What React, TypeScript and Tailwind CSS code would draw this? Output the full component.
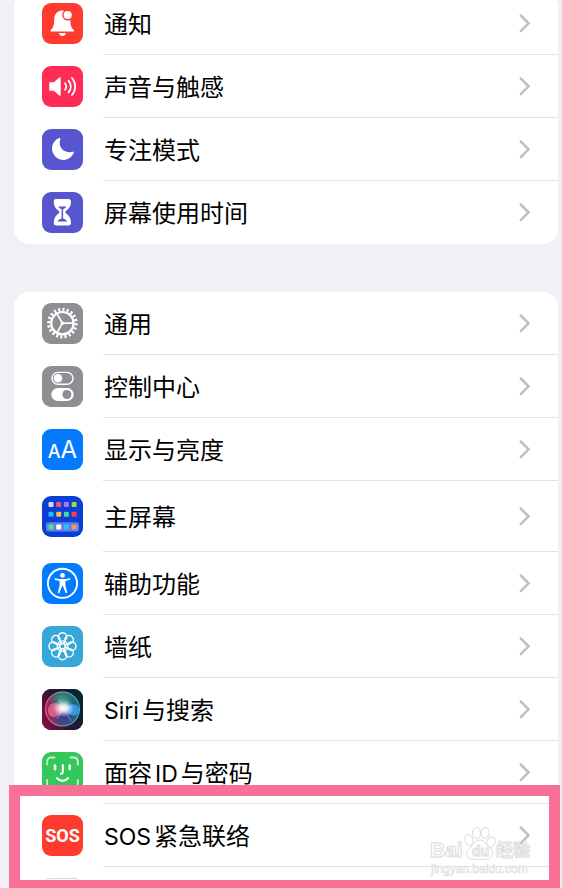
import type { ReactNode } from 'react'
import clsx from 'clsx'

interface SettingsItem {
  label: string
  icon: ReactNode
  tile: string
  tall?: boolean
  highlighted?: boolean
}

const BellIcon = () => (
  <svg viewBox="0 0 41 41" className="size-full" fill="#fff">
    <path d="M20.3 7.6c-5 0-7.800 3.6-8 8.6-.2 5.2-.6 7.600-2.600 9.700-.9 1-1.200 1.600-1.200 2.600h23.700c0-1-.4-1.600-1.300-2.600-2-2.100-2.400-4.500-2.600-9.700-.2-5-3-8.600-8-8.600z" />
    <path d="M17 30h6.800c-.3 1.900-1.500 3-3.400 3s-3.100-1.100-3.400-3z" />
    <circle cx="25.700" cy="12" r="5.500" fill="#ff3b30" />
    <circle cx="25.700" cy="12" r="4.100" />
  </svg>
)

const SpeakerIcon = () => (
  <svg viewBox="0 0 41 41" className="size-full" fill="none" stroke="#fff" strokeWidth="1.800" strokeLinecap="round">
    <path d="M8.200 16.300h3.600l5.500-4.700c.7-.6 1.400-.3 1.400.6v16.600c0 .9-.7 1.200-1.400.6l-5.500-4.700H8.200c-.6 0-1-.4-1-1v-6.400c0-.6.4-1 1-1z" fill="#fff" stroke="none" />
    <path d="M23 17.200c1.500 2 1.500 4.600 0 6.600" />
    <path d="M26.500 14.600c2.900 3.600 2.900 8.200 0 11.800" />
    <path d="M30 12c4.300 5.200 4.300 11.800 0 17" />
  </svg>
)

const MoonIcon = () => (
  <svg viewBox="0 0 41 41" className="size-full" fill="#fff">
    <path d="M17.200 9.100C18 8.700 18.600 9.300 18.300 10.100C15.800 18 21.500 25 30.700 22.700C31.600 22.500 32.100 23 31.800 23.800A11.300 11.300 0 1 1 17.200 9.100z" />
  </svg>
)

const HourglassIcon = () => (
  <svg viewBox="0 0 41 41" className="size-full">
    <path
      d="M14 7h12.700c1.500 0 2.300 1 2.300 2.300 0 4.600-1.900 7.500-4.800 9.400-1.200.8-1.200 2 0 2.800 2.900 1.900 4.800 5 4.800 9.600 0 1.300-.8 2.300-2.300 2.300H14c-1.500 0-2.300-1-2.300-2.300 0-4.600 1.900-7.700 4.800-9.600 1.200-.8 1.200-2 0-2.800-2.900-1.900-4.800-4.800-4.800-9.400C11.700 8 12.500 7 14 7z"
      fill="#fff"
    />
    <path d="M16.300 14.600h8.100c-.9 1.400-2 2.100-3.300 2.700v9.200c1.900.6 3.500 1.600 4.200 3.100h-9.900c.7-1.500 2.300-2.500 4.200-3.100v-9.200c-1.300-.6-2.400-1.300-3.300-2.700z" fill="#5756ce" />
  </svg>
)

const GearIcon = () => (
  <svg viewBox="0 0 41 41" className="size-full" fill="none" stroke="#fff">
    <circle cx="20.400" cy="20.200" r="11.200" strokeWidth="2.200" />
    <circle cx="20.400" cy="20.200" r="13.700" strokeWidth="3.200" pathLength="40" strokeDasharray="1 1" />
    <path d="M20.400 20.200h11M20.400 20.200l-5.500-9.600M20.400 20.200l-5.500 9.600" strokeWidth="1.700" />
    <circle cx="20.400" cy="20.200" r="1.700" fill="#fff" stroke="none" />
  </svg>
)

const TogglesIcon = () => (
  <svg viewBox="0 0 41 41" className="size-full">
    <rect x="10" y="6.400" width="21" height="11.800" rx="5.900" fill="none" stroke="#fff" strokeWidth="1.400" />
    <circle cx="16" cy="12.300" r="4.300" fill="#fff" />
    <rect x="9.300" y="22" width="22.400" height="13" rx="6.500" fill="#fff" />
    <circle cx="24.900" cy="28.500" r="4.500" fill="#8e8e93" />
  </svg>
)

const TextSizeIcon = () => (
  <span className="flex items-baseline font-[Inter,sans-serif] leading-none text-white">
    <span className="text-lg font-medium leading-none">A</span>
    <span className="text-2xl leading-none">A</span>
  </span>
)

const HomeScreenIcon = () => {
  const rows = [
    { y: 6, colors: ['#d9dde8', '#fb5468', '#b573f5', '#a6d63c'] },
    { y: 15.8, colors: ['#2fb4f5', '#fcc02d', '#41d9a0', '#fb3d3d'] },
    { y: 28.400, colors: ['#5be08a', '#ffffff', '#22c3f7', '#fb9750'] },
  ]
  return (
    <svg viewBox="0 0 41 41" className="size-full">
      <rect x="4" y="26.200" width="33" height="9.400" rx="2.500" fill="#fff" opacity="0.350" />
      {rows.map((row) =>
        row.colors.map((color, i) => (
          <rect key={color} x={6.5 + i * 7.7} y={row.y} width="5" height="5" rx="1" fill={color} />
        ))
      )}
    </svg>
  )
}

const AccessibilityIcon = () => (
  <svg viewBox="0 0 41 41" className="size-full">
    <circle cx="20.500" cy="20.300" r="14.600" fill="none" stroke="#fff" strokeWidth="1.900" />
    <circle cx="20.500" cy="12.400" r="2.400" fill="#fff" />
    <path
      d="M13.700 15.300c2.400.6 4.500.8 6.800.8s4.400-.2 6.800-.8c1.200-.2 1.500 1.300.4 1.600l-4.300 1v4.700l1.700 6.300c.3 1.300-1.300 1.700-1.700.6l-2.500-6.400h-.8l-2.500 6.400c-.4 1.100-2 .7-1.700-.6l1.700-6.300v-4.700l-4.300-1c-1.100-.3-.8-1.800.4-1.600z"
      fill="#fff"
    />
  </svg>
)

const FlowerIcon = () => (
  <svg viewBox="0 0 41 41" className="size-full" fill="none" stroke="#fff" strokeWidth="1.400">
    <circle cx="20.500" cy="20.200" r="2.700" />
    {[0, 45, 90, 135, 180, 225, 270, 315].map((angle) => (
      <g key={angle} transform={`rotate(${angle} 20.500 20.200)`}>
        <circle cx="20.500" cy="10.900" r="4.200" />
        <path d="M19.500 17.700L17.800 13.700M21.500 17.700L23.200 13.700" />
      </g>
    ))}
  </svg>
)

const SiriIcon = () => (
  <svg viewBox="0 0 41 41" className="size-full">
    <defs>
      <linearGradient id="siri-base" x1="0" y1="0.700" x2="1" y2="0.200">
        <stop offset="0" stopColor="#7d0c3f" />
        <stop offset="0.450" stopColor="#2a1433" />
        <stop offset="1" stopColor="#04262e" />
      </linearGradient>
      <linearGradient id="siri-orb" x1="0" y1="0.600" x2="1" y2="0.400">
        <stop offset="0" stopColor="#a02458" />
        <stop offset="0.500" stopColor="#47506f" />
        <stop offset="1" stopColor="#0f6f80" />
      </linearGradient>
      <linearGradient id="siri-ring" x1="0" y1="0.500" x2="1" y2="0.500">
        <stop offset="0" stopColor="#ee5a84" />
        <stop offset="0.500" stopColor="#6cc7a2" />
        <stop offset="1" stopColor="#3fa8c4" />
      </linearGradient>
      <radialGradient id="siri-green">
        <stop offset="0" stopColor="#2fae85" stopOpacity="0.900" />
        <stop offset="1" stopColor="#2fae85" stopOpacity="0" />
      </radialGradient>
      <radialGradient id="siri-violet">
        <stop offset="0" stopColor="#3b3aa8" stopOpacity="0.900" />
        <stop offset="1" stopColor="#3b3aa8" stopOpacity="0" />
      </radialGradient>
      <radialGradient id="siri-glow">
        <stop offset="0" stopColor="#fff" />
        <stop offset="0.350" stopColor="#f4fbff" stopOpacity="0.850" />
        <stop offset="1" stopColor="#cfe9ff" stopOpacity="0" />
      </radialGradient>
    </defs>
    <rect width="41" height="41" fill="url(#siri-base)" />
    <circle cx="20.500" cy="20" r="17" fill="url(#siri-orb)" stroke="url(#siri-ring)" strokeWidth="1.100" />
    <ellipse cx="20" cy="10" rx="12" ry="8" fill="url(#siri-green)" />
    <ellipse cx="22" cy="30" rx="12" ry="8" fill="url(#siri-violet)" />
    <path d="M6 22c0-5 3-8 6.500-8s7 3 10 6c-3 4-6 8-10.500 8-3.500 0-6-3-6-6z" fill="#f0688f" opacity="0.800" />
    <path d="M37 21c0-3.500-2.500-5.500-6-5.500s-6 1.500-9 4.500c3 4 6 6.500 10 6.500 3 0 5-2.500 5-5.500z" fill="#3d9df0" opacity="0.850" />
    <path d="M21 20l-6 10M22 20l7 12M21 19l-4-9" stroke="#e6f2ff" strokeWidth="0.800" opacity="0.450" />
    <ellipse cx="21.500" cy="19" rx="11" ry="9" fill="url(#siri-glow)" />
  </svg>
)

const FaceIdIcon = () => (
  <svg viewBox="0 0 41 41" className="size-full" fill="none" stroke="#fff" strokeLinecap="round">
    <path
      d="M5.200 12.500V9.500c0-2.600 1.600-4 4-4h3.300M28.500 5.500h3.300c2.400 0 4 1.400 4 4v3M35.800 28v3.500c0 2.600-1.600 4-4 4h-3.300M12.500 35.500H9.200c-2.400 0-4-1.400-4-4V28"
      strokeWidth="1.800"
      opacity="0.750"
    />
    <path d="M13 13.500v3.600M27.700 13.500v3.600" strokeWidth="2.600" />
    <path d="M20.800 13v6.800c0 1.400-.7 2-2 2" strokeWidth="2" />
    <path d="M15 26.200c3.400 3.200 7.600 3.200 11 0" strokeWidth="2.200" />
  </svg>
)

const SosIcon = () => (
  <span className="font-[Roboto,sans-serif] text-lg font-bold leading-none text-white">SOS</span>
)

const generalTop: SettingsItem[] = [
  { label: '通知', icon: <BellIcon />, tile: 'bg-[#ff3b30]' },
  { label: '声音与触感', icon: <SpeakerIcon />, tile: 'bg-[#ff2d55]' },
  { label: '专注模式', icon: <MoonIcon />, tile: 'bg-[#5756ce]' },
  { label: '屏幕使用时间', icon: <HourglassIcon />, tile: 'bg-[#5756ce]' },
]

const generalMain: SettingsItem[] = [
  { label: '通用', icon: <GearIcon />, tile: 'bg-[#8e8e93]' },
  { label: '控制中心', icon: <TogglesIcon />, tile: 'bg-[#8e8e93]' },
  { label: '显示与亮度', icon: <TextSizeIcon />, tile: 'bg-[#047aff]' },
  { label: '主屏幕', icon: <HomeScreenIcon />, tile: 'bg-[#0a3ed6]', tall: true },
  { label: '辅助功能', icon: <AccessibilityIcon />, tile: 'bg-[#047aff]' },
  { label: '墙纸', icon: <FlowerIcon />, tile: 'bg-[#36a7d9]' },
  { label: 'Siri与搜索', icon: <SiriIcon />, tile: 'bg-[#2a1433]' },
  { label: '面容ID与密码', icon: <FaceIdIcon />, tile: 'bg-[#34c759]' },
  { label: 'SOS紧急联络', icon: <SosIcon />, tile: 'bg-[#ff3b30]', highlighted: true },
]

const Chevron = () => (
  <svg viewBox="0 0 12 20" className="h-5 w-3 shrink-0" fill="none" stroke="#c0c0c2" strokeWidth="2.500">
    <path d="M1.800 2.500L9.500 10.300L1.800 18.100" strokeLinecap="round" strokeLinejoin="miter" />
  </svg>
)

// Latin runs sit slightly apart from the Chinese characters around them
const Label = ({ text }: { text: string }) => (
  <span className="flex items-baseline gap-[3px] pl-px pt-1 text-2xl text-black">
    {text.split(/([A-Za-z]+)/).filter(Boolean).map((part) => (
      <span key={part} className={clsx(/[A-Za-z]/.test(part) && 'text-[23px]')}>
        {part}
      </span>
    ))}
  </span>
)

const Watermark = () => (
  <svg
    viewBox="0 0 104 52"
    className="pointer-events-none absolute right-[25px] top-[21px] z-20 h-[52px] w-[104px] font-['Liberation_Sans','Noto_Sans_CJK_SC',sans-serif]"
    fill="#fff"
    stroke="#dcdcdc"
    strokeWidth="1"
  >
    <text x="1" y="32" fontSize="21" fontWeight="700">Bai</text>
    <ellipse cx="40" cy="15" rx="4" ry="5.500" transform="rotate(-20 40 15)" />
    <ellipse cx="47.500" cy="8" rx="4" ry="5.500" />
    <ellipse cx="56" cy="8" rx="4" ry="5.500" transform="rotate(8 56 8)" />
    <ellipse cx="62" cy="17" rx="4" ry="5.500" transform="rotate(24 62 17)" />
    <path d="M51 15c5 0 6 4 9 7s4.500 5 3 9c-1.500 3.500-5 3.500-12 3.500s-11.500 0-13-3.500c-1.500-4 .500-6 4-9s4-7 9-7z" />
    <text x="43" y="31" fontSize="14" fontWeight="700">du</text>
    <text x="67" y="31" fontSize="17" fontWeight="700">经验</text>
    <text x="2" y="48" fontSize="12" strokeWidth="0.600">jingyan.baidu.com</text>
  </svg>
)

function SettingsRow({ item, last }: { item: SettingsItem; last: boolean }) {
  return (
    <li className="relative">
      <a href="#" className={clsx('flex pl-7', item.tall ? 'h-[71px]' : 'h-[63px]')}>
        <span
          className={clsx(
            'flex size-[41px] shrink-0 items-center justify-center self-center overflow-hidden rounded-[9px]',
            item.tile
          )}
        >
          {item.icon}
        </span>
        <span
          className={clsx(
            'ml-5 flex flex-1 items-center justify-between border-b pr-[27px]',
            last ? 'border-transparent' : 'border-[#e2e2e4]'
          )}
        >
          <Label text={item.label} />
          <Chevron />
        </span>
      </a>
      {item.highlighted && (
        <>
          <div className="pointer-events-none absolute -bottom-6 -left-[5px] -right-0.5 -top-[19px] z-10 border-[11px] border-[#f87096]" />
          <Watermark />
        </>
      )}
    </li>
  )
}

function SettingsGroup({ items, children }: { items: SettingsItem[]; children?: ReactNode }) {
  return (
    <ul className="rounded-[15px] bg-white">
      {items.map((item, index) => (
        <SettingsRow key={item.label} item={item} last={!children && index === items.length - 1} />
      ))}
      {children}
    </ul>
  )
}

export default function App() {
  return (
    <main className="flex h-screen flex-col gap-12 overflow-hidden bg-[#f1f0f6] pl-3.5 pr-1 font-[Inter,'Noto_Sans_CJK_SC',sans-serif]">
      <div className="-mt-2">
        <SettingsGroup items={generalTop} />
      </div>
      <SettingsGroup items={generalMain}>
        <li className="flex h-[63px] items-center pl-7">
          <span className="size-[41px] rounded-[9px] border border-[#d8d8dc] bg-white" />
        </li>
      </SettingsGroup>
    </main>
  )
}
